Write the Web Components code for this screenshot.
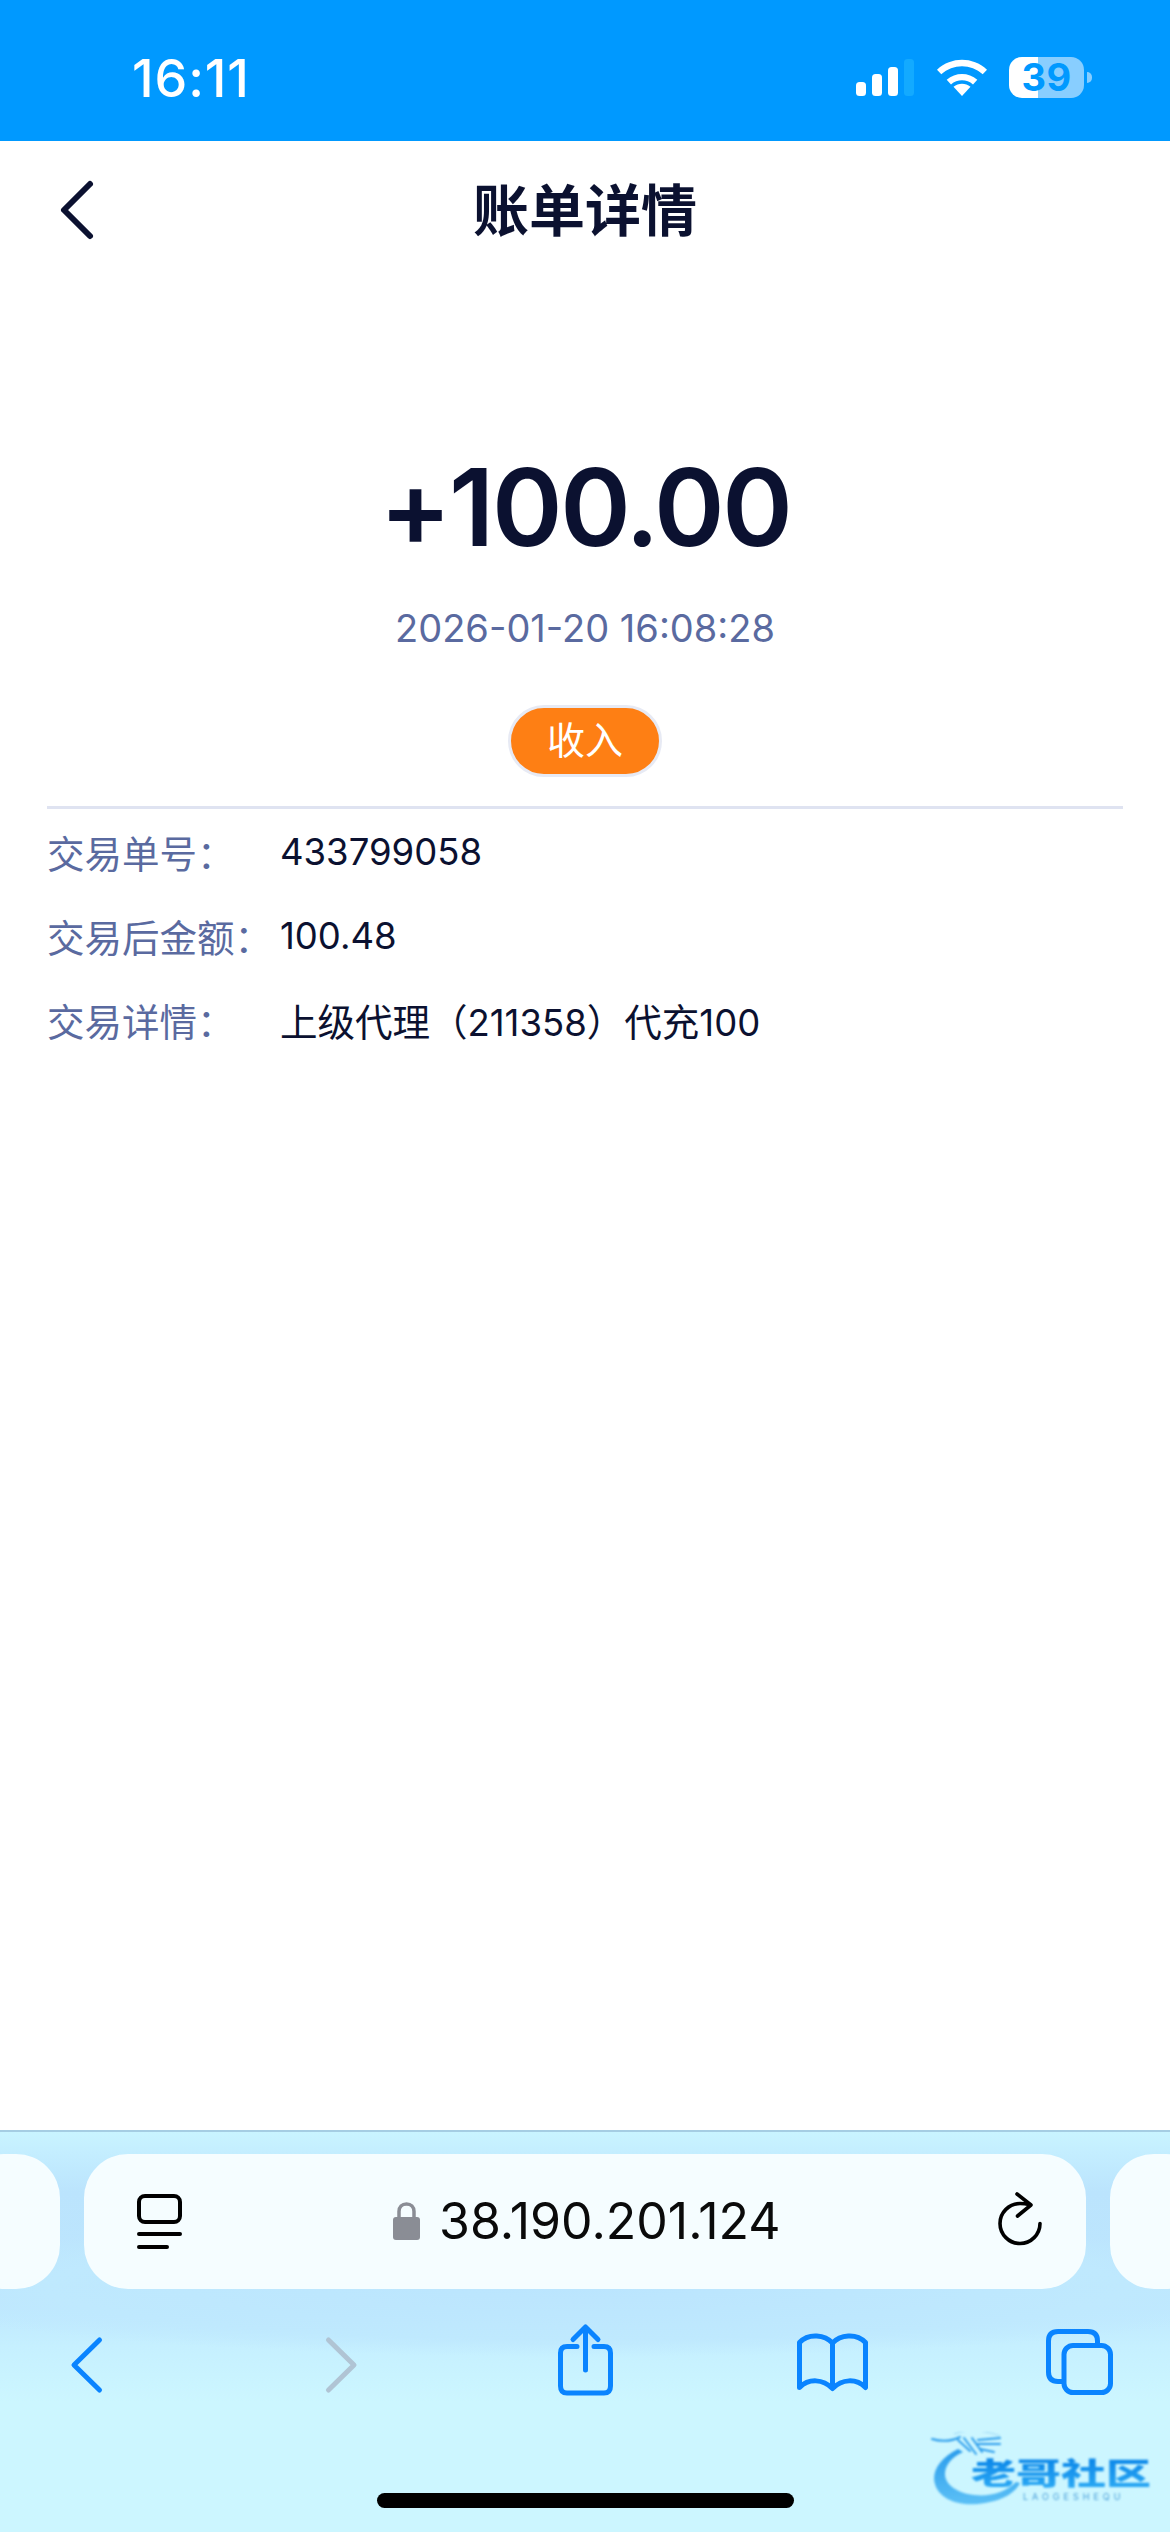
<!DOCTYPE html>
<html lang="zh"><head><meta charset="utf-8"><title>账单详情</title>
<style>
html,body{margin:0;padding:0;background:#fff}
body{width:1170px;height:2532px;overflow:hidden;font-family:Inter,"Noto Sans CJK SC",sans-serif;display:flex;flex-direction:column}
</style></head><body>
<status-bar></status-bar>
<nav-bar>账单详情</nav-bar>
<bill-page>
  <bill-hero amount="+100.00" time="2026-01-20 16:08:28" tag="收入"></bill-hero>
  <bill-row label="交易单号："><i>433799058</i></bill-row>
  <bill-row label="交易后金额："><i>100.48</i></bill-row>
  <bill-row label="交易详情：">上级代理（<i>211358</i>）代充<i>100</i></bill-row>
</bill-page>
<safari-bar url="38.190.201.124"></safari-bar>
<script>
const F='Inter,"Noto Sans CJK SC",sans-serif';
function def(name,html,init){customElements.define(name,class extends HTMLElement{constructor(){super();this.attachShadow({mode:'open'}).innerHTML=typeof html==='function'?html(this):html;}connectedCallback(){if(init)init(this)}});}
def('status-bar',`<style>
:host{display:flex;flex:none;height:141px;background:#0099ff;color:#fff;box-sizing:border-box;font-family:${F};align-items:flex-start;position:relative}
.t{margin:53px 0 0 132px;font-size:52px;line-height:52px;font-weight:500;letter-spacing:.9px}
.r{margin:57px 0 0 auto;padding-right:86px;display:flex;align-items:flex-start}
svg{display:block}
.bat{position:relative;width:75px;height:41px;margin-left:22px;border-radius:13px;background:linear-gradient(90deg,#fff 0 29px,#88ceff 29px);color:#0099ff;font-size:38px;font-weight:700;line-height:41px;text-align:center;letter-spacing:.5px}
.nub{position:absolute;right:-8px;top:15px;width:5px;height:11px;border-radius:0 6px 6px 0;background:#88ceff}
</style><div class="t">16:11</div><div class="r">
<svg width="58" height="40" viewBox="0 0 58 40"><g><rect x="0" y="25" width="10" height="14" rx="3.5" fill="#fff"/><rect x="16" y="17" width="10" height="22" rx="3.5" fill="#fff"/><rect x="32" y="10" width="10" height="29" rx="3.5" fill="#fff"/><rect x="48" y="2" width="10" height="37" rx="3.5" fill="#13aaff"/></g></svg>
<svg style="margin-left:23px" width="50" height="40" viewBox="0 0 50 40"><path d="M25 39 16.500 29.700C21.500 25.600 28.500 25.600 33.500 29.700Z" fill="#fff"/><path d="M9.700 22.800 14 27.400C20.200 22 29.800 22 36 27.400L40.300 22.800C31.500 15 18.500 15 9.700 22.800Z" fill="#fff"/><path d="M0 12.700 4.300 17.300C16 6.600 34 6.600 45.700 17.300L50 12.700C35.500-.5 14.500-.5 0 12.700Z" fill="#fff"/></svg>
<div class="bat">39<span class="nub"></span></div></div>`);
def('nav-bar',`<style>
:host{display:flex;flex:none;height:141px;align-items:center;justify-content:center;position:relative;font-family:${F};color:#0b1130;font-size:56px;font-weight:600;background:#fff}
svg{position:absolute;left:58px;top:38px}
span{display:block;margin-top:-11px}
</style><svg width="40" height="62" viewBox="0 0 40 62"><path d="M32 5 6 31 32 57" fill="none" stroke="#0b1130" stroke-width="6" stroke-linecap="round" stroke-linejoin="round"/></svg><span><slot></slot></span>`);
def('bill-page',`<style>
:host{display:flex;flex-direction:column;flex:1;min-height:0;padding:0 47px;background:#fff;box-sizing:border-box;font-family:${F}}
</style><slot></slot>`);
def('bill-hero',h=>`<style>
:host{display:flex;flex-direction:column;align-items:center;padding-top:162px;box-sizing:border-box;border-bottom:3px solid #dfe3f1;height:527px}
.a{font-size:107px;line-height:126px;font-weight:600;color:#0b1130;letter-spacing:-2.400px}
.d{margin-top:35px;font-size:38px;line-height:46px;color:#5a6aa0}
.p{margin-top:54px;box-sizing:border-box;width:154px;height:72px;border-radius:36px;border:3px solid #e7eaf4;background:#fe7f14;color:#fff;font-size:38px;line-height:64px;text-align:center}
</style><div class="a">${h.getAttribute('amount')}</div><div class="d">${h.getAttribute('time')}</div><div class="p">${h.getAttribute('tag')}</div>`);
def('bill-row',h=>`<style>
:host{display:flex;height:84.300px;align-items:center;font-size:37.500px;color:#0b1130}
.l{width:233px;flex:none;color:#5a6aa0}
::slotted(i){font-style:normal;font-size:36.500px}
</style><div class="l">${h.getAttribute('label')}</div><div><slot></slot></div>`);
def('safari-bar',h=>`<style>
:host{display:block;flex:none;height:402px;box-sizing:border-box;border-top:2px solid #a5cde3;position:relative;overflow:hidden;font-family:${F};
background:radial-gradient(720px 70px at 585px 155px,#bbe5fe 0,#bfe9fe 75%,transparent 100%),linear-gradient(#c9f4ff 0,#c4eeff 20px,#bbe4fd 60px,#bde6fe 165px,#c6f0ff 215px,#ccf6ff 270px,#ccf6ff 100%)}
svg{display:block;flex:none;overflow:visible}
.tabs{display:flex;gap:24px;margin:22px 0 0 -40px;width:1300px}
.tab{background:#f5fdff;height:135px;border-radius:44px;flex:none}
.side{width:100px}
.url{width:1002px;display:flex;align-items:center;position:relative}
.url .left{position:absolute;left:53px;top:40px}
.mid{display:flex;align-items:center;margin-left:309px;margin-top:-2px}
.txt{font-size:50px;font-weight:400;color:#0a0a0a;margin-left:19px;letter-spacing:0;line-height:60px}
.url .right{position:absolute;left:914px;top:38px}
.icons{display:flex;position:relative;height:90px;padding-left:71px;margin-top:46px;align-items:flex-start}
.home{position:absolute;left:377px;top:361px;width:417px;height:15px;border-radius:8px;background:#000}
</style>
<div class="tabs"><div class="tab side"></div><div class="tab url">
<svg class="left" width="45" height="56" viewBox="0 0 45 56"><rect x="2" y="2" width="41" height="26" rx="6" fill="none" stroke="#000" stroke-width="4"/><path d="M2 40H43M2 53H30" fill="none" stroke="#000" stroke-width="4" stroke-linecap="round"/></svg>
<div class="mid"><svg width="27" height="38" viewBox="0 0 27 38"><rect x="0" y="15" width="27" height="23" rx="3" fill="#8a8d95"/><path d="M6 16V9.500C6 5 9 2 13.500 2S21 5 21 9.500V16" fill="none" stroke="#8a8d95" stroke-width="3.500"/></svg><span class="txt">${h.getAttribute('url')}</span></div>
<svg class="right" width="44" height="54" viewBox="0 0 44 54"><path d="M31 12.500C29 12 25 11.500 22 11.500 11 11.500 2 20.500 2 31.500S11 51.500 22 51.500 42 42.500 42 31.500" fill="none" stroke="#000" stroke-width="3.600" stroke-linecap="round"/><path d="M19 2 33 13 19.500 24" fill="none" stroke="#000" stroke-width="3.600" stroke-linecap="round" stroke-linejoin="round"/></svg>
</div><div class="tab side"></div></div>
<div class="icons">
<svg style="margin-top:2px" width="31" height="56" viewBox="0 0 31 56" fill="none" stroke="#0a84ff" stroke-width="5" stroke-linecap="round" stroke-linejoin="round"><path d="M28.500 3 3 28 28.500 53"/></svg>
<svg style="margin:2px 0 0 224px" width="31" height="56" viewBox="0 0 31 56" fill="none" stroke="#b0c4d4" stroke-width="5" stroke-linecap="round" stroke-linejoin="round"><path d="M2.500 3 28 28 2.500 53"/></svg>
<svg style="margin:-10px 0 0 201px" width="55" height="71" viewBox="0 0 55 71" fill="none" stroke="#0a84ff" stroke-width="5" stroke-linecap="round" stroke-linejoin="round"><path d="M19 21.500H9Q2.500 21.500 2.500 28V61Q2.500 68 9 68H46Q52.500 68 52.500 61V28Q52.500 21.500 46 21.500H36"/><path d="M27.500 45V3M15 14.500 27.500 2 40 14.500"/></svg>
<svg style="margin:-3px 0 0 184px" width="71" height="60" viewBox="0 0 71 60" fill="none" stroke="#0a84ff" stroke-width="5" stroke-linecap="round" stroke-linejoin="round"><path d="M35.500 11C28 3 12 .5 2.500 10.500V55.500C12 46 26 47 35.500 56.500 45 47 59 46 68.500 55.500V10.500C59 .5 43 3 35.500 11ZM35.500 11V55"/></svg>
<svg style="margin:-6px 0 0 178px" width="67" height="66" viewBox="0 0 67 66" fill="none" stroke="#0a84ff" stroke-width="5" stroke-linejoin="round"><path d="M16 52.500H12Q2.500 52.500 2.500 43V12Q2.500 2.500 12 2.500H42Q51.500 2.500 51.500 12V16"/><rect x="18" y="16.500" width="46.500" height="47" rx="9"/></svg>
</div>
<div class="home"></div><water-mark></water-mark>`);
def('water-mark',`<style>
:host{position:absolute;left:928px;top:300px;width:235px;height:80px;display:block;font-family:${F};filter:blur(.8px);pointer-events:none}
svg{position:absolute;left:0;top:0}
.zh{position:absolute;left:43px;top:26px;font-size:30px;line-height:30px;font-weight:900;transform:scaleX(1.5);transform-origin:0 0;background:linear-gradient(#0b86e8,#2aa8f4);-webkit-background-clip:text;background-clip:text;color:transparent;white-space:nowrap}
.en{position:absolute;left:95px;top:60px;font-size:9px;line-height:9px;letter-spacing:4px;color:#4a9ed8;white-space:nowrap}
</style>
<svg width="235" height="80" viewBox="0 0 235 80"><defs><linearGradient id="g" x1="0" y1="0" x2="0" y2="1"><stop offset="0" stop-color="#2a9cec"/><stop offset="1" stop-color="#5cc0f6"/></linearGradient></defs>
<path d="M30 17C12 26 3 40 7 52 11 67 30 74 50 72 70 70 86 63 92 51L88 50C78 60 62 65 46 63 28 61 17 52 17 42 17 33 24 25 35 20Z" fill="url(#g)"/>
<g fill="none" stroke="#2a9cec" stroke-width="2" stroke-linecap="round"><path d="M4 7C14 10 24 9 32 5"/><path d="M30 8 42 19"/><path d="M36 6 48 22"/><path d="M44 6 54 20"/><path d="M50 8 72 6"/><path d="M50 12 72 12"/><path d="M52 17 66 20"/></g><path d="M26 2C40-3 60-1 72 4" fill="none" stroke="#9ad6f6" stroke-width="1"/></svg>
<span class="zh">老哥社区</span><span class="en">LAOGESHEQU</span>`);
</script>
</body></html>
